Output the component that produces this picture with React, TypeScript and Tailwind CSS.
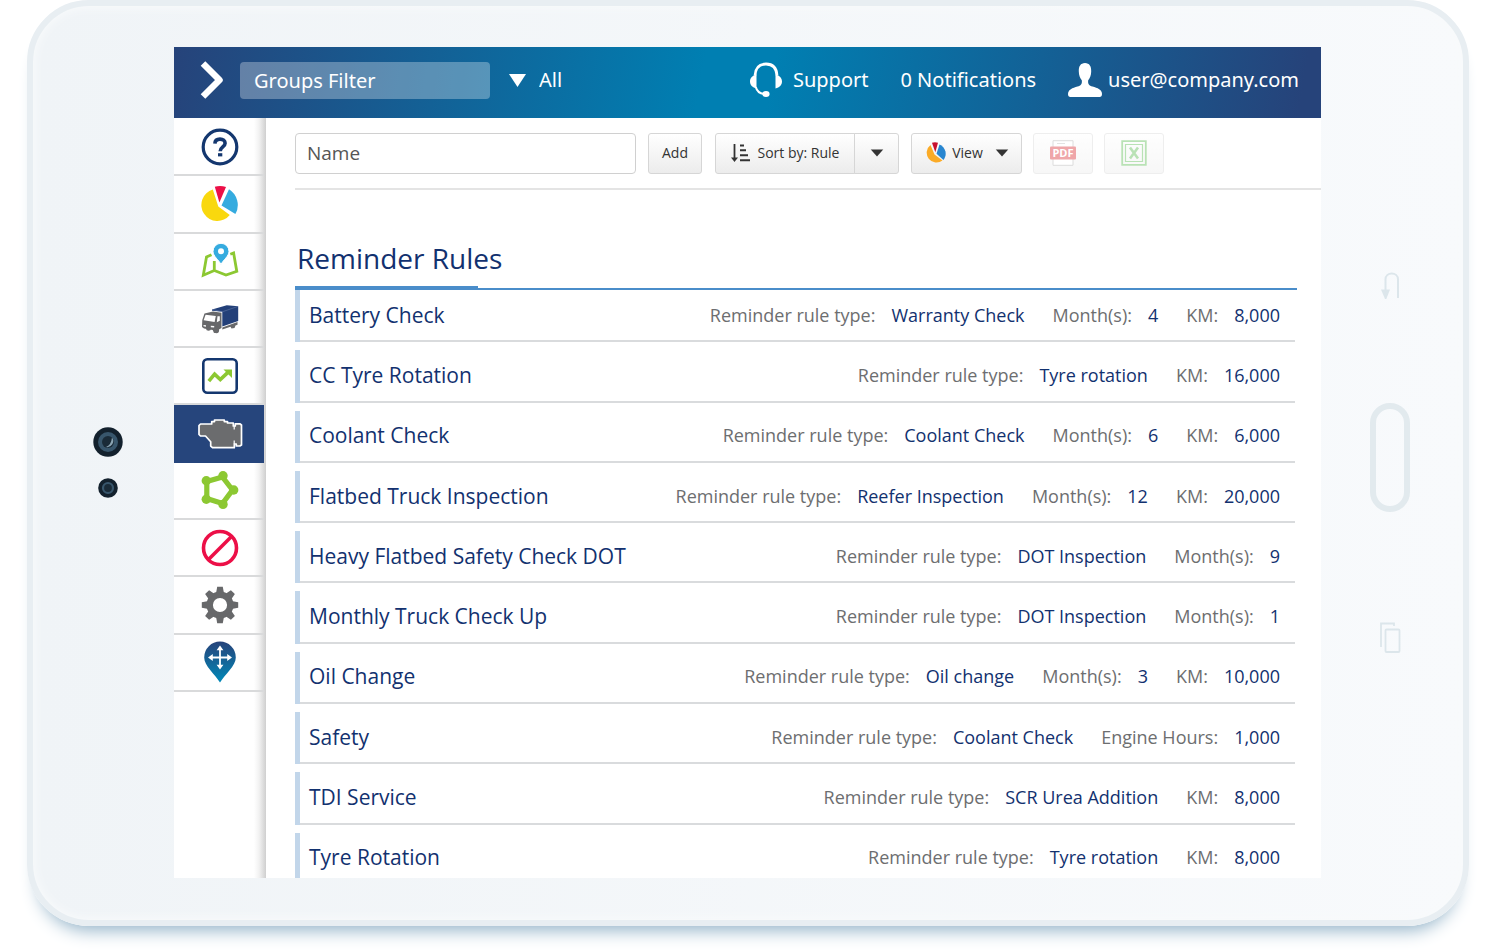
import React from "react";

type Detail = [label: string, value: string];
type Rule = { name: string; details: Detail[] };

const rules: Rule[] = [
  { name: "Battery Check", details: [["Reminder rule type:", "Warranty Check"], ["Month(s):", "4"], ["KM:", "8,000"]] },
  { name: "CC Tyre Rotation", details: [["Reminder rule type:", "Tyre rotation"], ["KM:", "16,000"]] },
  { name: "Coolant Check", details: [["Reminder rule type:", "Coolant Check"], ["Month(s):", "6"], ["KM:", "6,000"]] },
  { name: "Flatbed Truck Inspection", details: [["Reminder rule type:", "Reefer Inspection"], ["Month(s):", "12"], ["KM:", "20,000"]] },
  { name: "Heavy Flatbed Safety Check DOT", details: [["Reminder rule type:", "DOT Inspection"], ["Month(s):", "9"]] },
  { name: "Monthly Truck Check Up", details: [["Reminder rule type:", "DOT Inspection"], ["Month(s):", "1"]] },
  { name: "Oil Change", details: [["Reminder rule type:", "Oil change"], ["Month(s):", "3"], ["KM:", "10,000"]] },
  { name: "Safety", details: [["Reminder rule type:", "Coolant Check"], ["Engine Hours:", "1,000"]] },
  { name: "TDI Service", details: [["Reminder rule type:", "SCR Urea Addition"], ["KM:", "8,000"]] },
  { name: "Tyre Rotation", details: [["Reminder rule type:", "Tyre rotation"], ["KM:", "8,000"]] },
];

const HelpIcon = () => (
  <svg viewBox="0 0 40 40" className="size-10" fill="none" stroke="#14376f">
    <circle cx="20" cy="20" r="16.8" strokeWidth="3.2" />
    <path d="M14.9 16.6c.1-3 2.100-4.500 5.100-4.500s5.100 1.600 5.100 4.200c0 3.600-4.900 3.700-4.900 7.900" strokeWidth="3.600" />
    <path d="M18 27.800h4.300" strokeWidth="3.200" />
  </svg>
);

const PieIcon = () => (
  <svg viewBox="0 0 40 40" className="size-10">
    <path d="M12.800 5.600 18.300 22.500l11.500 8.500A16 16 0 1 1 12.800 5.600z" fill="#f9d80e" />
    <path d="M14.800 2.800q5.500-1.600 11.200.2L19.400 18.500z" fill="#ec0f47" />
    <path d="M21.500 21.600 29 5.300a18.500 18.500 0 0 1 6.400 24.800z" fill="#35abdf" />
  </svg>
);

const MapIcon = () => (
  <svg viewBox="0 0 40 40" className="size-10">
    <path d="M11.500 13.700 6.500 16 3.300 34.200 14.300 29.500 26 34l10.800-3.600L33.600 12l-3.300 1.200M14.300 29.500V20" fill="none" stroke="#8cc832" strokeWidth="2.800" />
    <path d="M21 23.500c-2-4.500-8-8-8-13.200a8 8 0 0 1 16 0c0 5.200-6 8.700-8 13.200z" fill="#35abdf" stroke="#fff" strokeWidth="1" />
    <circle cx="21" cy="10.300" r="3" fill="#fff" />
  </svg>
);

const TruckIcon = () => (
  <svg viewBox="0 0 40 40" className="size-10">
    <path d="M12 10.400 26.800 6.200l11.400 1V22L22.300 27.600V12.800L12 11.700z" fill="#234079" />
    <path d="M4.500 14.500 13 12.600l8.500 1.200V29l-3 1.800-1.300 2.800-3.200.4-1.300-3L4 29.500l-2-1.500.3-7z" fill="#67686a" />
    <path d="M5.600 15.800 15.800 17l-1.200 6-11-1.800z" fill="#fff" />
    <path d="M17.500 17.300h2.300v4.500l-3 1.500zM3.500 26l2.500.3v1.400l-2.500-.4zM10.800 26.800l3.400.3v1.500l-3.400-.4z" fill="#fff" />
    <path d="M12.200 10.400 22.300 12.800 38 7.400" fill="none" stroke="#6d81ac" strokeWidth=".5" />
    <path d="M22.300 28.600 37.500 23v2.800l-2 .7-1 2.600-3 .5-1-1.900-8.200 2.700z" fill="#67686a" />
    <ellipse cx="16.500" cy="31" rx="2.600" ry="3.200" fill="#67686a" />
    <ellipse cx="8.500" cy="30" rx="2.400" ry="1.800" fill="#67686a" />
  </svg>
);

const TrendIcon = () => (
  <svg viewBox="0 0 40 40" className="size-10">
    <rect x="3.300" y="3.300" width="33.400" height="33.400" rx="4" fill="#fff" stroke="#14376f" strokeWidth="2.600" />
    <path d="m8.800 25.200 5.800-7 5.700 5.400 7.400-7" fill="none" stroke="#8cc832" strokeWidth="3.600" />
    <path d="M23.500 13.500H32V22z" fill="#8cc832" />
  </svg>
);

const EngineIcon = () => (
  <svg viewBox="0 0 48 32" className="h-8 w-12">
    <path
      d="M4.500 6h11.200V3.600h2.800V2h9.800v1.600h3.200V5h5.800v3h2V5.800h4.500L45.500 7v20l-1.700 1h-3.500v-2h-2v3.700H16.500l-1.800-1.600v-4.400L9.500 18H4.500L3 16.500v-9z"
      fill="#6b6c6e" stroke="#fff" strokeWidth="1.700" strokeLinejoin="round"
    />
    <path d="M38.200 8v3.500M38.200 26v-3.500" stroke="#fff" strokeWidth="1.200" />
  </svg>
);

const ZoneIcon = () => (
  <svg viewBox="0 0 40 40" className="size-10" fill="#8cc832">
    <path d="M22.500 7 32.500 20 22.500 33.500 6.800 28.500V11.500z" fill="none" stroke="#8cc832" strokeWidth="5.200" />
    <circle cx="23" cy="5.800" r="4.700" />
    <circle cx="33.700" cy="20" r="4.700" />
    <circle cx="23" cy="34.400" r="4.700" />
    <circle cx="6.300" cy="29.200" r="4.700" />
    <circle cx="6.300" cy="10.800" r="4.700" />
  </svg>
);

const BanIcon = () => (
  <svg viewBox="0 0 40 40" className="size-10" fill="none" stroke="#ec0f47" strokeWidth="3.600">
    <circle cx="20" cy="20" r="16.500" />
    <path d="M31.500 8.500 8.500 31.500" />
  </svg>
);

const GearIcon = () => (
  <svg viewBox="0 0 40 40" className="size-10" fill="#67686a">
    <circle cx="20" cy="20" r="10.300" fill="none" stroke="#67686a" strokeWidth="6.400" />
    {[0, 45, 90, 135, 180, 225, 270, 315].map((a) => (
      <path key={a} d="M16 8.500 17.200 1.800h5.600L24 8.500z" transform={`rotate(${a} 20 20)`} />
    ))}
  </svg>
);

const PlaceIcon = () => (
  <svg viewBox="0 0 34 42" className="h-[42px] w-[34px]">
    <defs>
      <linearGradient id="place" x1="0" y1="0" x2="0" y2="1">
        <stop offset="0" stopColor="#26437a" />
        <stop offset="1" stopColor="#0089b8" />
      </linearGradient>
    </defs>
    <path d="M17 41.500C12 33 1.200 25 1.200 16.400a15.800 15.800 0 0 1 31.600 0C32.800 25 22 33 17 41.500z" fill="url(#place)" />
    <path d="M17 8v17M8.500 16.500h17" stroke="#fff" strokeWidth="1.800" />
    <path d="m17 4.500 3.400 4.800h-6.800zM17 28.500l3.400-4.800h-6.800zM5 16.500l4.800-3.400v6.800zM29 16.500l-4.800-3.400v6.800z" fill="#fff" />
  </svg>
);

const navItems: { label: string; icon: React.ReactNode; active?: boolean }[] = [
  { label: "Help", icon: <HelpIcon /> },
  { label: "Dashboard", icon: <PieIcon /> },
  { label: "Map", icon: <MapIcon /> },
  { label: "Vehicles", icon: <TruckIcon /> },
  { label: "Activity", icon: <TrendIcon /> },
  { label: "Engine and maintenance", icon: <EngineIcon />, active: true },
  { label: "Zones", icon: <ZoneIcon /> },
  { label: "Exceptions", icon: <BanIcon /> },
  { label: "Administration", icon: <GearIcon /> },
  { label: "Locations", icon: <PlaceIcon /> },
];

const Caret = () => (
  <svg viewBox="0 0 14 9" className="h-2 w-[14px]" fill="#333">
    <path d="M0 .5h14L7 8.500z" />
  </svg>
);

const toolButton =
  "flex h-[41px] items-center justify-center rounded-[3px] border border-[#d6d6d6] bg-linear-to-b from-white to-[#ececec] text-[14px] leading-5 text-[#333]";

function Header() {
  return (
    <header className="flex h-[71px] shrink-0 items-center bg-[linear-gradient(100deg,#26437a_0%,#007fb2_46%,#007fb2_52%,#26437a_98%)] pr-[22px] pb-[5px] pl-[26px] font-['Noto_Sans',sans-serif] text-[20px] leading-6 text-white">
      <button aria-label="Expand menu" className="mr-4">
        <svg viewBox="0 0 24 40" className="h-10 w-6" fill="none" stroke="#fff" strokeWidth="6.500" strokeLinejoin="round">
          <path d="M3 3.500 19.500 20 3 36.500" />
        </svg>
      </button>
      <input
        aria-label="Groups Filter"
        placeholder="Groups Filter"
        className="h-[37px] w-[250px] rounded bg-white/30 px-[14px] outline-none placeholder:text-white"
      />
      <label className="ml-[19px] flex items-center gap-[13px]">
        <svg viewBox="0 0 17 13" className="h-[13px] w-[17px]" fill="#fff">
          <path d="M0 0h17L8.500 13z" />
        </svg>
        <select aria-label="Group" className="appearance-none bg-transparent outline-none">
          <option>All</option>
        </select>
      </label>
      <a href="#support" className="ml-auto flex items-center gap-[10px]">
        <svg viewBox="0 0 34 36" className="h-9 w-[34px]">
          <path d="M6 13.500C6.500 6 10.500 2 17 2s10.500 4 11 11.500" fill="none" stroke="#fff" strokeWidth="2.800" />
          <path d="M7.500 12.500v14C3.500 25.500 1 23 1 19.500s2.500-6 6.500-7zM26.500 12.500v14c4-1 6.500-3.500 6.500-7s-2.500-6-6.500-7z" fill="#fff" />
          <path d="M6.800 25c1 4 3.700 6.500 8.200 7" fill="none" stroke="#fff" strokeWidth="2" />
          <ellipse cx="17" cy="32" rx="3.600" ry="3" fill="#fff" />
        </svg>
        Support
      </a>
      <a href="#notifications" className="ml-8">0 Notifications</a>
      <a href="#account" className="ml-8 flex items-center gap-[6px]">
        <svg viewBox="0 0 34 34" className="h-[34px] w-[34px]" fill="#fff">
          <path d="M17 0c4.500 0 6.400 3.500 6.200 8.500-.1 4-1.200 6.500-3 8.700-.5 4 1 5.300 4.300 6.300 5 1.500 9.500 3 9.500 7.500 0 2-.8 3-2.500 3h-29C.8 34 0 33 0 31c0-4.500 4.500-6 9.500-7.500 3.300-1 4.800-2.300 4.300-6.300-1.800-2.200-2.900-4.700-3-8.700C10.600 3.500 12.500 0 17 0z" />
        </svg>
        user@company.com
      </a>
    </header>
  );
}

function Sidebar() {
  return (
    <nav className="w-[92px] shrink-0 bg-[linear-gradient(to_right,transparent_80px,#f2f2f2_85px,#cfcfcf_92px)] pt-px">
      <ul className="grid h-[573px] auto-rows-fr pr-[2px]">
        {navItems.map((item) => (
          <li key={item.label} className={item.active ? "bg-[#26457c]" : "border-b-2 border-[#d9dadb]"}>
            <a href="#nav" aria-label={item.label} className="flex h-full items-center justify-center pl-[2px]">
              {item.icon}
            </a>
          </li>
        ))}
      </ul>
    </nav>
  );
}

function Toolbar() {
  return (
    <div className="flex h-[72px] items-center border-b-2 border-[#e4e4e4]">
      <input
        aria-label="Name"
        placeholder="Name"
        className="h-[41px] w-[341px] rounded border border-[#d0d0d0] px-[11px] text-[19px] outline-none placeholder:text-[#555]"
      />
      <button className={`${toolButton} ml-3 w-[54px]`}>Add</button>
      <div className="ml-[13px] flex">
        <button className={`${toolButton} w-[140px] gap-[7px] rounded-r-none`}>
          <svg viewBox="0 0 20 18" className="h-[18px] w-5" fill="none" stroke="#333" strokeWidth="2">
            <path d="M3.500 0v15" strokeWidth="1.800" />
            <path d="M0 13.500h7L3.500 18z" fill="#333" stroke="none" />
            <path d="M9 1.500h4M9 6.300h6M9 11.300h8M9 16.300h10" />
          </svg>
          Sort by: Rule
        </button>
        <button aria-label="Sort options" className={`${toolButton} -ml-px w-[45px] rounded-l-none`}>
          <Caret />
        </button>
      </div>
      <button className={`${toolButton} ml-3 w-[111px]`}>
        <svg viewBox="0 0 22 22" className="mr-[6px] size-[22px]">
          <path d="M6.500 3 10.500 12.500l8 6A9.400 9.400 0 1 1 6.500 3z" fill="#fbab27" />
          <path d="M8 .8q3-1 6 0l-2.700 9.500z" fill="#c8102e" />
          <path d="M12.500 11.800 15.500 2.500a10 10 0 0 1 4 15.500z" fill="#2886d0" />
        </svg>
        <span className="mr-3">View</span>
        <Caret />
      </button>
      <button aria-label="Export PDF" className={`${toolButton} ml-[11px] w-[60px] opacity-40`}>
        <svg viewBox="0 0 26 26" className="size-[26px]">
          <path d="M3 .7h20v24.600H3z" fill="#fff" stroke="#aaa" />
          <path d="M7 3.500h8" stroke="#bbb" />
          <path d="M1 6.500h24q1 0 1 1v11q0 1-1 1H1q-1 0-1-1v-11q0-1 1-1z" fill="#d8232a" />
          <text x="13" y="17" textAnchor="middle" fill="#fff" className="font-['Open_Sans',sans-serif] text-[11px] font-bold">PDF</text>
        </svg>
      </button>
      <button aria-label="Export spreadsheet" className={`${toolButton} ml-[11px] w-[60px] opacity-40`}>
        <svg viewBox="0 0 26 26" className="size-[26px]" fill="none" stroke="#53b848">
          <path d="M1.200 1.200h23.600v23.600H1.200z" strokeWidth="1.800" />
          <path d="M4.500 4.500h17v17h-17z" strokeWidth="1.200" />
          <path d="m9 7.500 8 11M17 7.500l-8 11" strokeWidth="2.600" />
        </svg>
      </button>
    </div>
  );
}

function RuleList() {
  return (
    <section className="pt-11 pr-6">
      <h1 className="border-b-2 border-[#4a8dca] text-[#12316f]">
        <span className="block pb-1 pl-[2px] text-[28px] leading-[48px]">Reminder Rules</span>
        <span className="block h-[2px] w-[183px] bg-[#4a8dca]" />
      </h1>
      <ul className="mr-[2px] grid h-[595px] auto-rows-fr gap-2">
        {rules.map((rule) => (
          <li key={rule.name} className="flex border-l-[5px] border-[#c2d6ea]">
            <a href="#rule" className="flex flex-1 items-center border-b-2 border-[#d9dbdd] pr-[15px] pb-px pl-[9px] text-[#12316f]">
              <span className="mr-auto text-[21px] leading-7">{rule.name}</span>
              <span className="flex gap-7 text-[18px] leading-7">
                {rule.details.map(([label, value]) => (
                  <span key={label} className="flex gap-4">
                    <span className="text-[#6d6e70]">{label}</span>
                    <span>{value}</span>
                  </span>
                ))}
              </span>
            </a>
          </li>
        ))}
      </ul>
    </section>
  );
}

function Cameras() {
  return (
    <div className="flex w-[141px] shrink-0 flex-col items-center justify-center gap-[21px] pb-px pl-2">
      <svg viewBox="0 0 30 30" className="size-[30px]">
        <circle cx="15" cy="15" r="14.700" fill="#13212d" />
        <circle cx="15" cy="15" r="10" fill="#38566c" />
        <circle cx="15" cy="15" r="6" fill="#1a2b38" />
        <path d="M19 10.500a6 6 0 0 1-6 9.500q5-1.500 6-9.500z" fill="#8ba4b3" />
      </svg>
      <svg viewBox="0 0 20 20" className="size-5">
        <circle cx="10" cy="10" r="9.800" fill="#13212d" />
        <circle cx="10" cy="10" r="5" fill="#1a2b38" stroke="#38566c" strokeWidth="2.200" />
      </svg>
    </div>
  );
}

function DeviceButtons() {
  return (
    <div className="flex w-[142px] shrink-0 flex-col items-center justify-center pr-1 pb-px">
      <svg viewBox="0 0 20 27" className="h-[27px] w-5" fill="none" stroke="#dce6eb" strokeWidth="2">
        <path d="M5.500 20V7.500C5.500-.5 18 -.5 18 7.500V26" />
        <path d="M1 17.500h9L6.300 27H5z" fill="#dce6eb" stroke="none" />
      </svg>
      <button aria-label="Home" className="mt-[104px] mb-[110px] h-[109px] w-10 rounded-full border-[6px] border-[#e2eaee]" />
      <svg viewBox="0 0 22 31" className="h-[31px] w-[22px]" fill="none" stroke="#dce6eb" strokeWidth="1.800">
        <path d="M2 25V1.500h13V4" />
        <rect x="6.500" y="7.500" width="14" height="22.500" rx="1" />
      </svg>
    </div>
  );
}

export default function App() {
  return (
    <div className="h-screen overflow-hidden bg-white px-[27px] pb-[26px] font-['Open_Sans',sans-serif]">
      <div className="flex h-full rounded-[62px] border-[6px] border-[#e8eef2] bg-linear-to-r from-[#f0f4f7] to-[#f8fafc] shadow-[0_16px_18px_-12px_#8fb0c6,inset_0_0_8px_2px_#f8fafb]">
        <Cameras />
        <div className="mt-[41px] mb-[42px] flex min-w-0 flex-1 flex-col overflow-hidden bg-white">
          <Header />
          <div className="flex min-h-0 flex-1 overflow-hidden">
            <Sidebar />
            <main className="min-w-0 flex-1 pl-[29px]">
              <Toolbar />
              <RuleList />
            </main>
          </div>
        </div>
        <DeviceButtons />
      </div>
    </div>
  );
}
